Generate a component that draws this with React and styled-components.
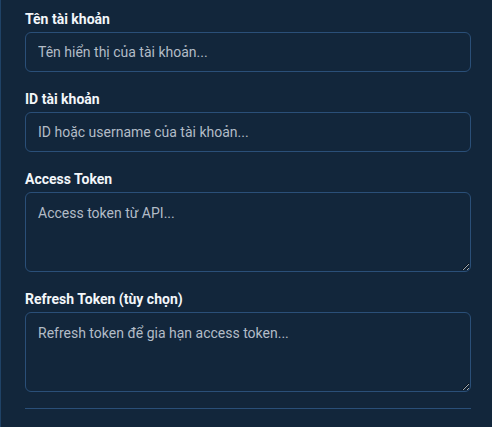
import styled, { createGlobalStyle } from "styled-components";

const GlobalStyle = createGlobalStyle`
  html, body {
    margin: 0;
    padding: 0;
    background: #12263b;
  }
  * { box-sizing: border-box; }
`;

const Panel = styled.div`
  width: 492px;
  height: 427px;
  background: #12263b;
  border-left: 1px solid #1f4266;
  padding: 9px 21px 0 24px;
  font-family: Roboto, "Noto Sans", sans-serif;
  overflow: hidden;
`;

const Field = styled.div`
  display: flex;
  flex-direction: column;
  margin-bottom: 17px;
  &:last-of-type { margin-bottom: 16px; }
`;

const Label = styled.label`
  font-size: 14px;
  line-height: 20px;
  font-weight: 700;
  color: #f3f6fa;
  margin-bottom: 3px;
`;

const Input = styled.input`
  height: 40px;
  width: 100%;
  background: #12263b;
  border: 1px solid #2a4f78;
  border-radius: 6px;
  padding: 0 12px;
  font-family: inherit;
  font-size: 14px;
  color: #e6ecf2;
  outline: none;
  &::placeholder { color: #b3bcc7; }
`;

const TextArea = styled.textarea`
  height: 80px;
  width: 100%;
  background: #12263b;
  border: 1px solid #2a4f78;
  border-radius: 6px;
  padding: 10px 12px;
  font-family: inherit;
  font-size: 14px;
  line-height: 20px;
  color: #e6ecf2;
  outline: none;
  display: block;
  &::placeholder { color: #b3bcc7; }
`;

const Divider = styled.hr`
  border: none;
  border-top: 1px solid #2a4f78;
  margin: 0;
`;

export default function App() {
  return (
    <>
      <GlobalStyle />
      <Panel>
        <Field>
          <Label>Tên tài khoản</Label>
          <Input placeholder="Tên hiển thị của tài khoản..." />
        </Field>
        <Field>
          <Label>ID tài khoản</Label>
          <Input placeholder="ID hoặc username của tài khoản..." />
        </Field>
        <Field>
          <Label>Access Token</Label>
          <TextArea placeholder="Access token từ API..." />
        </Field>
        <Field>
          <Label>Refresh Token (tùy chọn)</Label>
          <TextArea placeholder="Refresh token để gia hạn access token..." />
        </Field>
        <Divider />
      </Panel>
    </>
  );
}
